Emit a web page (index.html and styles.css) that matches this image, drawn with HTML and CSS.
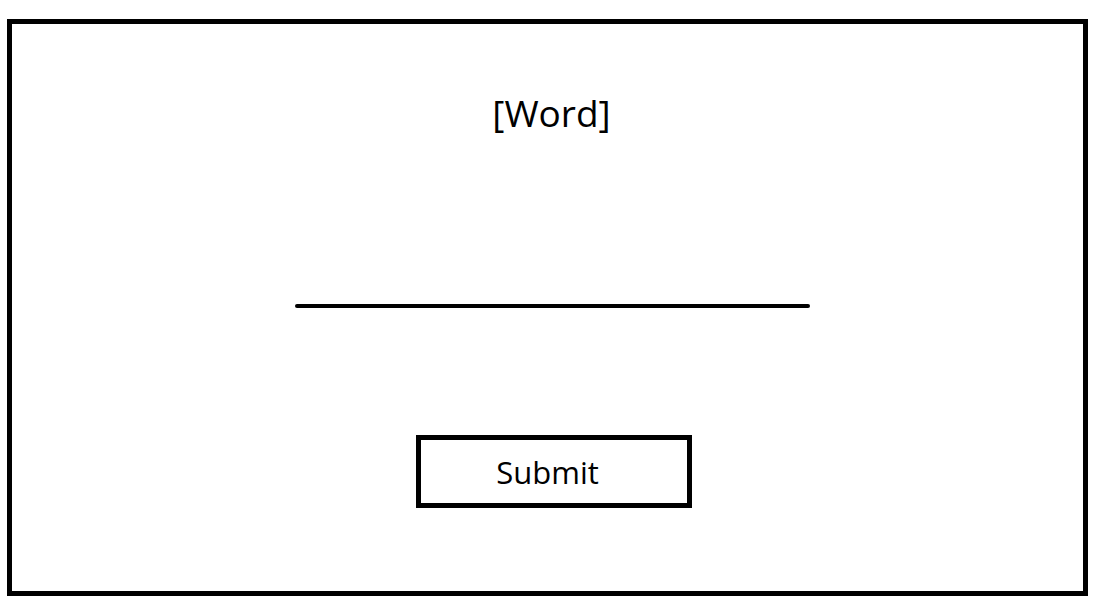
FILE: index.html
```html
<!DOCTYPE html>
<html>

<head>
    <meta charset="UTF-8">
    <link rel="stylesheet" href="styles.css">
    <title>Word</title>
</head>

<body>
    <div class="frame">
        <div class="word">[Word]</div>
        <div class="answerLine"></div>
        <div class="submitButton">Submit</div>
    </div>
</body>

</html>
```

FILE: styles.css
```css
body {
    margin: 0;
    padding: 19px 0 0 7px;
    font-family: "Open Sans", sans-serif;
    background: white;
    color: black;
}

.frame {
    box-sizing: border-box;
    width: 1081px;
    height: 577px;
    border: solid 5px black;
    display: flex;
    flex-direction: column;
    align-items: center;
    padding-top: 64px;
}

.word {
    font-size: 37px;
    line-height: 50px;
    margin-left: 8px;
}

.answerLine {
    width: 515px;
    height: 4px;
    border-radius: 2px;
    background: black;
    margin-top: 166px;
    margin-left: 10px;
}

.submitButton {
    box-sizing: border-box;
    width: 276px;
    height: 73px;
    border: solid 5px black;
    margin-top: 127px;
    margin-left: 13px;
    padding: 2px 13px 0 0;
    font-size: 31px;
    line-height: 61px;
    text-align: center;
    cursor: pointer;
}
```
